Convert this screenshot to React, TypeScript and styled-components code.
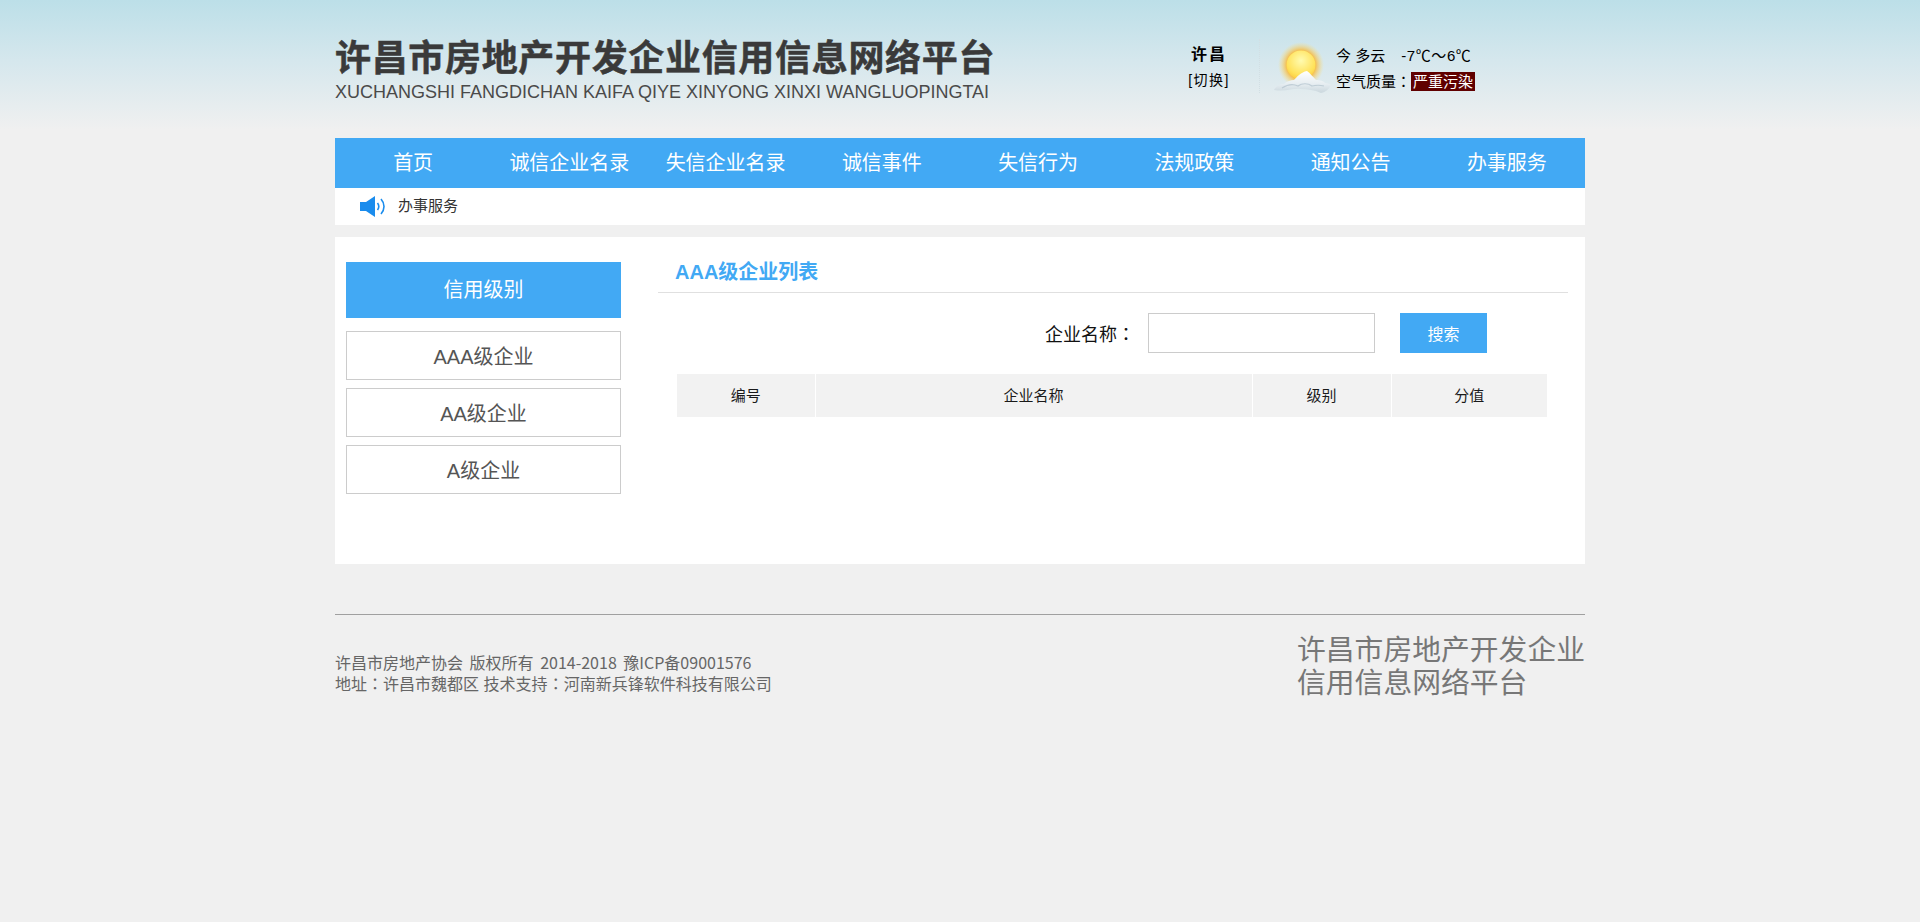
import React from 'react'
import styled, { createGlobalStyle } from 'styled-components'

const cjk = '"Liberation Sans", "Noto Sans CJK SC", sans-serif'
const blue = '#42a9f4'

const GlobalStyle = createGlobalStyle`
  html, body {
    margin: 0;
    padding: 0;
    background: #f0f0f0;
    font-family: ${cjk};
  }
`

const Page = styled.div`
  min-height: 922px;
  background: linear-gradient(180deg, #bcdfe8 0, #d5e7ed 60px, #f0f0f0 130px);
  background-repeat: no-repeat;
`

const Wrap = styled.div`
  width: 1250px;
  margin: 0 auto;
`

const Header = styled.header`
  display: flex;
  height: 138px;
  box-sizing: border-box;
`

const Brand = styled.div`
  flex: 0 0 825px;
  padding-top: 34px;
`

const BrandTitle = styled.div`
  font-size: 36px;
  line-height: 50px;
  font-weight: 700;
  color: #3a3a3a;
  letter-spacing: 0.67px;
  -webkit-text-stroke: 0.5px #3a3a3a;
  white-space: nowrap;
`

const BrandSub = styled.div`
  font-size: 18px;
  line-height: 16px;
  color: #4a4a4a;
  white-space: nowrap;
`

const City = styled.div`
  flex: 0 0 100px;
  height: 54px;
  margin-top: 39px;
  box-sizing: border-box;
  border-right: 1px dotted #d2dfe4;
  text-align: center;
  color: #000;
  padding-right: 1px;
`

const CityName = styled.div`
  font-size: 16px;
  line-height: 31px;
  font-weight: 700;
  letter-spacing: 2px;
`

const CitySwitch = styled.div`
  font-size: 14px;
  line-height: 20px;
  letter-spacing: 1.4px;
`

const WeatherIcon = styled.svg`
  flex: 0 0 60px;
  width: 60px;
  height: 56px;
  margin: 39px 4px 0 12px;
`

const WeatherText = styled.div`
  padding-top: 43px;
  font-size: 15px;
  line-height: 25px;
  color: #000;
  white-space: pre;
`

const Temperature = styled.span`
  margin-left: 16px;
  letter-spacing: 0.6px;
`

const AirBadge = styled.span`
  display: inline-block;
  height: 19px;
  line-height: 19px;
  padding: 0 2px;
  background: #600000;
  color: #fff;
`

const Colon = styled.span`
  font-family: "Noto Sans CJK TC", sans-serif;
`

const Nav = styled.nav`
  display: flex;
  height: 50px;
  background: ${blue};
`

const NavItem = styled.a`
  flex: 1;
  font-size: 20px;
  line-height: 50px;
  text-align: center;
  color: #fff;
`

const Notice = styled.div`
  display: flex;
  align-items: center;
  gap: 13px;
  height: 37px;
  padding-left: 25px;
  background: #fff;
  font-size: 15px;
  line-height: 18px;
  color: #333;
`

const NoticeText = styled.span`
  margin-bottom: 2px;
`

const Panel = styled.main`
  display: flex;
  height: 327px;
  margin-top: 12px;
  background: #fff;
`

const Sidebar = styled.aside`
  flex: 0 0 275px;
  margin: 25px 37px 0 11px;
`

const SideHead = styled.div`
  height: 56px;
  margin-bottom: 13px;
  background: ${blue};
  color: #fff;
  font-size: 20px;
  line-height: 56px;
  text-align: center;
`

const SideItem = styled.a`
  display: block;
  height: 49px;
  box-sizing: border-box;
  margin-bottom: 8px;
  border: 1px solid #ccc;
  color: #555;
  font-size: 20px;
  line-height: 51px;
  text-align: center;
`

const Content = styled.section`
  flex: 0 0 910px;
`

const ContentTitle = styled.h2`
  height: 56px;
  box-sizing: border-box;
  margin: 0;
  padding: 21px 0 0 17px;
  border-bottom: 1px solid #e0e0e0;
  color: ${blue};
  font-size: 20px;
  line-height: 28px;
  font-weight: 700;
`

const SearchRow = styled.form`
  display: flex;
  justify-content: flex-end;
  align-items: center;
  height: 40px;
  margin-top: 20px;
  padding-right: 81px;
`

const SearchLabel = styled.label`
  margin-right: 13px;
  font-size: 18px;
  color: #111;
`

const SearchInput = styled.input`
  width: 227px;
  height: 40px;
  box-sizing: border-box;
  margin: 0 25px 0 0;
  border: 1px solid #ccc;
  background: #fff;
`

const SearchButton = styled.button`
  width: 87px;
  height: 40px;
  padding: 0;
  border: 0;
  background: ${blue};
  color: #fff;
  font-family: ${cjk};
  font-size: 16px;
`

const Table = styled.table`
  width: 870px;
  margin: 21px 0 0 19px;
  border-collapse: collapse;
  table-layout: fixed;
`

const Th = styled.th<{ $w: number }>`
  width: ${(p) => p.$w}px;
  height: 43px;
  box-sizing: border-box;
  padding: 0 0 2px;
  background: #f2f2f2;
  color: #1a1a1a;
  font-size: 15px;
  font-weight: 400;
  & + & {
    border-left: 1px solid #fff;
  }
`

const Footer = styled.footer`
  display: flex;
  justify-content: space-between;
  align-items: flex-start;
  margin-top: 50px;
  border-top: 1px solid #a0a0a0;
`

const FooterText = styled.div`
  margin-top: 37px;
  font-family: "Noto Sans CJK SC", sans-serif;
  font-size: 16px;
  line-height: 21px;
  color: #666;
`

const FooterLine = styled.div<{ $space: number }>`
  word-spacing: ${(p) => p.$space}px;
`

const FooterBrand = styled.div`
  width: 288px;
  margin-top: 16px;
  font-family: "Noto Sans CJK SC", sans-serif;
  font-size: 28.8px;
  line-height: 33px;
  color: #777;
`

function SunCloud() {
  return (
    <WeatherIcon viewBox="0 0 60 56">
      <defs>
        <radialGradient id="halo">
          <stop offset="0.62" stopColor="#f7b73a" stopOpacity="0.9" />
          <stop offset="1" stopColor="#fbe17c" stopOpacity="0" />
        </radialGradient>
        <radialGradient id="disc" cx="0.5" cy="0.35" r="0.7">
          <stop offset="0" stopColor="#fffbb0" />
          <stop offset="0.7" stopColor="#ffe25a" />
          <stop offset="1" stopColor="#fbc53c" />
        </radialGradient>
        <linearGradient id="cloud" x1="0" y1="0" x2="0" y2="1">
          <stop offset="0" stopColor="#ffffff" />
          <stop offset="0.6" stopColor="#e6edf1" />
          <stop offset="1" stopColor="#c6d3da" stopOpacity="0.8" />
        </linearGradient>
      </defs>
      <circle cx="29" cy="26" r="23" fill="url(#halo)" />
      <circle cx="29" cy="26" r="14.5" fill="url(#disc)" />
      <path
        d="M2 51 C4 47 8 45 12 45 C15 42 19 41 22 41 C25 38 29 33 35 32 C38 34 41 38 44 41 C48 41 52 42 53 44 C55 44 58 45 59 46 C57 50 54 53 49 54 C42 51 36 50 28 50 C22 49 14 53 2 51 Z"
        fill="url(#cloud)"
      />
      <path
        d="M10 49 C16 45 22 45 26 47 C30 44 36 44 40 47 C44 46 48 46 52 47"
        fill="none"
        stroke="#b7c6cf"
        strokeWidth="1.2"
        opacity="0.8"
      />
    </WeatherIcon>
  )
}

function Speaker() {
  return (
    <svg width="25" height="21" viewBox="0 0 25 21">
      <path d="M0 6 H6 L15 0 V21 L6 15 H0 Z" fill="#1a8ced" />
      <path d="M17.5 7 C19 9 19 12 17.5 14" fill="none" stroke="#1a8ced" strokeWidth="1.6" />
      <path d="M21 3 C25 7.5 25 13.5 21 18" fill="none" stroke="#1a8ced" strokeWidth="1.6" />
    </svg>
  )
}

const navItems = ['首页', '诚信企业名录', '失信企业名录', '诚信事件', '失信行为', '法规政策', '通知公告', '办事服务']
const levels = ['AAA级企业', 'AA级企业', 'A级企业']
const columns: [string, number][] = [['编号', 138], ['企业名称', 437], ['级别', 139], ['分值', 156]]

export default function App() {
  return (
    <Page>
      <GlobalStyle />
      <Wrap>
        <Header>
          <Brand>
            <BrandTitle>许昌市房地产开发企业信用信息网络平台</BrandTitle>
            <BrandSub>XUCHANGSHI FANGDICHAN KAIFA QIYE XINYONG XINXI WANGLUOPINGTAI</BrandSub>
          </Brand>
          <City>
            <CityName>许昌</CityName>
            <CitySwitch>[切换]</CitySwitch>
          </City>
          <SunCloud />
          <WeatherText>
            今 多云<Temperature>-7℃～6℃</Temperature>
            <br />
            空气质量<Colon>：</Colon><AirBadge>严重污染</AirBadge>
          </WeatherText>
        </Header>
        <Nav>
          {navItems.map((item) => (
            <NavItem key={item}>{item}</NavItem>
          ))}
        </Nav>
        <Notice>
          <Speaker />
          <NoticeText>办事服务</NoticeText>
        </Notice>
        <Panel>
          <Sidebar>
            <SideHead>信用级别</SideHead>
            {levels.map((level) => (
              <SideItem key={level}>{level}</SideItem>
            ))}
          </Sidebar>
          <Content>
            <ContentTitle>AAA级企业列表</ContentTitle>
            <SearchRow>
              <SearchLabel>企业名称<Colon>：</Colon></SearchLabel>
              <SearchInput />
              <SearchButton type="button">搜索</SearchButton>
            </SearchRow>
            <Table>
              <thead>
                <tr>
                  {columns.map(([name, w]) => (
                    <Th key={name} $w={w}>{name}</Th>
                  ))}
                </tr>
              </thead>
            </Table>
          </Content>
        </Panel>
        <Footer>
          <FooterText>
            <FooterLine $space={3}>许昌市房地产协会 版权所有 2014-2018 豫ICP备09001576</FooterLine>
            <FooterLine $space={1}>地址<Colon>：</Colon>许昌市魏都区 技术支持<Colon>：</Colon>河南新兵锋软件科技有限公司</FooterLine>
          </FooterText>
          <FooterBrand>许昌市房地产开发企业信用信息网络平台</FooterBrand>
        </Footer>
      </Wrap>
    </Page>
  )
}
